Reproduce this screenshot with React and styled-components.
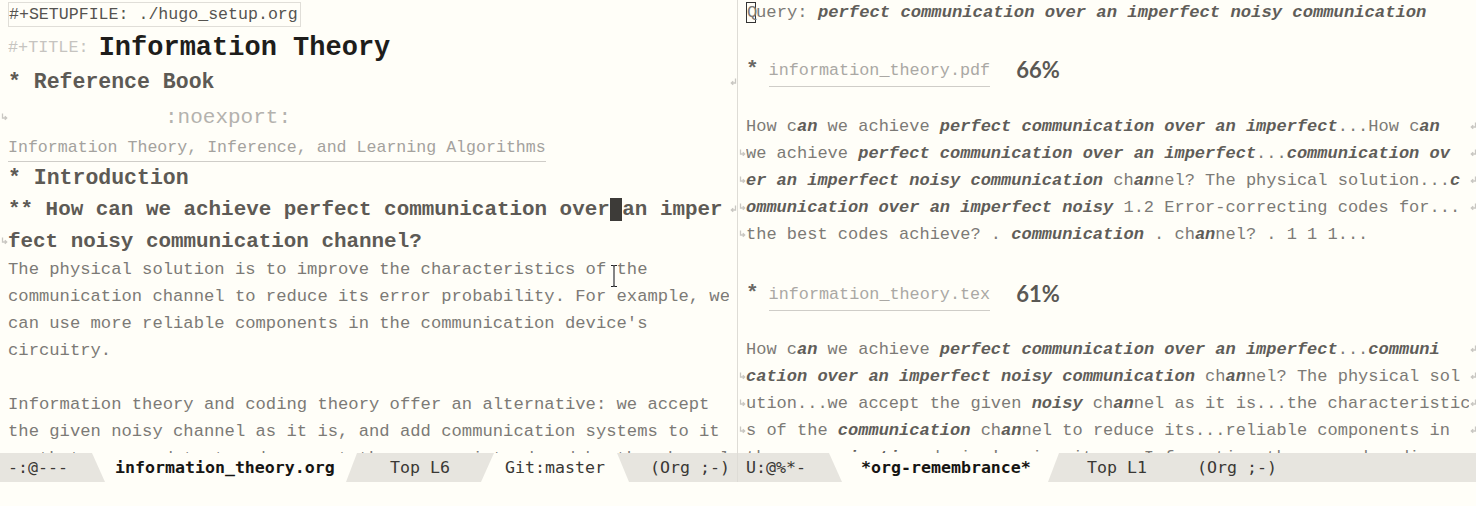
import React from "react";
import styled, { createGlobalStyle } from "styled-components";

// Emacs-ish colours
const BG = "#fffef8";
const MODE_BG = "#e7e5df";

const GlobalStyle = createGlobalStyle`
  html, body {
    margin: 0;
    padding: 0;
    background: ${BG};
  }
  body {
    font-family: "Liberation Mono", "DejaVu Sans Mono", monospace;
  }
`;

const Frame = styled.div`
  width: 1476px;
  height: 506px;
  display: flex;
  flex-direction: column;
  background: ${BG};
  overflow: hidden;
`;

const Windows = styled.div`
  display: flex;
  height: 482px;
`;

const Window = styled.div`
  display: flex;
  flex-direction: column;
  width: ${(p) => p.$w}px;
  flex-shrink: 0;
  border-right: ${(p) => (p.$divider ? "1px solid #dedcd6" : "none")};
`;

const Buffer = styled.div`
  position: relative;
  height: 453px;
  overflow: hidden;
  display: flex;
  flex-direction: column;
`;

const Row = styled.div`
  display: flex;
  align-items: center;
  height: ${(p) => p.$h}px;
  flex-shrink: 0;
  white-space: pre;
`;

const Fringe = styled.div`
  width: 8px;
  flex-shrink: 0;
  display: flex;
  align-items: center;
  justify-content: center;
`;

const Text = styled.div`
  flex: 1;
  overflow: hidden;
  display: flex;
  align-items: center;
  font-size: ${(p) => p.$size || 17.2}px;
  color: ${(p) => p.$color || "#7c7a76"};
  padding-left: ${(p) => p.$indent || 0}px;
`;

const KeywordBox = styled.span`
  display: inline-block;
  border: 1px solid #e0ded8;
  height: 23px;
  line-height: 23px;
  padding-right: 2px;
  font-size: 16.6px;
  color: #555350;
`;

const Meta = styled.span`
  font-size: 16.8px;
  color: #c6c4c0;
  margin-top: 3px;
`;

const Title = styled.span`
  font-size: 27px;
  font-weight: 700;
  color: #1e1d1b;
  margin-top: 3px;
`;

const Heading = styled.span`
  font-size: ${(p) => p.$size}px;
  font-weight: 700;
  color: #5d5a55;
`;

const Tag = styled.span`
  font-size: 21px;
  color: #b4b2ae;
`;

const Subtitle = styled.span`
  display: inline-block;
  font-size: 16.6px;
  color: #a4a29e;
  line-height: 26px;
  border-bottom: 1px solid #cfcdc8;
`;

const Cursor = styled.span`
  background: #3d3b38;
  color: ${BG};
`;

const QueryCursor = styled.span`
  display: inline-block;
  border: 1px solid #333;
  height: 19px;
  line-height: 19px;
  width: 8px;
`;

const Match = styled.span`
  font-weight: 700;
  font-style: italic;
  color: #5f5d59;
`;

const Star = styled.span`
  font-size: 21px;
  font-weight: 700;
  color: #6a6864;
  margin-right: 10px;
`;

const FileLink = styled.span`
  display: inline-block;
  font-size: 16.8px;
  color: #aaa8a4;
  line-height: 22px;
  padding-bottom: 4px;
  margin-top: 8px;
  border-bottom: 1px solid #cfcdc8;
`;

const Score = styled.span`
  font-family: Lato, "Noto Sans", sans-serif;
  font-size: 22px;
  font-weight: 700;
  color: #5a5854;
  margin-left: 26px;
`;

const IBeam = styled.svg`
  position: absolute;
  left: 609px;
  top: 264px;
`;

const ModeLine = styled.div`
  display: flex;
  height: 29px;
  background: ${MODE_BG};
  font-family: "DejaVu Sans Mono", "Liberation Mono", monospace;
  font-size: 16.6px;
  color: #3a3835;
  white-space: pre;
  overflow: hidden;
`;

const Seg = styled.div`
  display: flex;
  align-items: center;
  flex-shrink: 0;
  width: ${(p) => (p.$w ? `${p.$w}px` : "auto")};
  flex-grow: ${(p) => (p.$w ? 0 : 1)};
  padding-left: ${(p) => p.$pad || 0}px;
  box-sizing: border-box;
  font-weight: ${(p) => (p.$bold ? 700 : 400)};
  color: ${(p) => (p.$bold ? "#161513" : "#3a3835")};
  background: ${(p) => (p.$light ? BG : "transparent")};
  clip-path: ${(p) =>
    p.$shape === "down"
      ? "polygon(0 0, 100% 0, calc(100% - 11px) 100%, 13px 100%)"
      : p.$shape === "up"
      ? "polygon(13px 0, calc(100% - 12px) 0, 100% 100%, 0 100%)"
      : "none"};
`;

const Echo = styled.div`
  height: 24px;
  background: ${BG};
`;

function WrapRight() {
  return (
    <svg width="7" height="9" viewBox="0 0 7 9">
      <path d="M5.5 0.5 V5 H1.5 M3.2 3.2 L1.3 5 L3.2 6.8" fill="none" stroke="#c9c7c2" strokeWidth="1.3" />
    </svg>
  );
}

function WrapLeft() {
  return (
    <svg width="7" height="9" viewBox="0 0 7 9">
      <path d="M1.5 0.5 V5 H5.5 M3.8 3.2 L5.7 5 L3.8 6.8" fill="none" stroke="#c9c7c2" strokeWidth="1.3" />
    </svg>
  );
}

// text with |bold italic| parts
function Marked({ text }) {
  return text.split("|").map((part, i) =>
    i % 2 ? <Match key={i}>{part}</Match> : <span key={i}>{part}</span>
  );
}

function Line({ h, left, right, children, size, indent }) {
  return (
    <Row $h={h}>
      <Fringe>{left && <WrapLeft />}</Fringe>
      <Text $size={size} $indent={indent}>
        {children}
      </Text>
      <Fringe>{right && <WrapRight />}</Fringe>
    </Row>
  );
}

const bodyLines = [
  "The physical solution is to improve the characteristics of the",
  "communication channel to reduce its error probability. For example, we",
  "can use more reliable components in the communication device's",
  "circuitry.",
  "",
  "Information theory and coding theory offer an alternative: we accept",
  "the given noisy channel as it is, and add communication systems to it",
  "so that we can detect and correct the errors introduced by the channel.",
];

const pdfHits = [
  "How c|an| we achieve |perfect communication over an imperfect|...How c|an|",
  "we achieve |perfect communication over an imperfect|...|communication ov|",
  "|er an imperfect noisy communication| ch|an|nel? The physical solution...|c|",
  "|ommunication over an imperfect noisy| 1.2 Error-correcting codes for...",
  "the best codes achieve? . |communication| . ch|an|nel? . 1 1 1...",
];

const texHits = [
  "How c|an| we achieve |perfect communication over an imperfect|...|communi|",
  "|cation over an imperfect noisy communication| ch|an|nel? The physical sol",
  "ution...we accept the given |noisy| ch|an|nel as it is...the characteristic",
  "s of the |communication| ch|an|nel to reduce its...reliable components in",
  "the |communication| device's circuitry...Information theory and coding",
];

function FileHeading({ name, score }) {
  return (
    <Line h={38}>
      <Star>*</Star>
      <FileLink>{name}</FileLink>
      <Score>{score}</Score>
    </Line>
  );
}

function OrgBuffer() {
  return (
    <Buffer>
      <Line h={28}>
        <KeywordBox>#+SETUPFILE: ./hugo_setup.org</KeywordBox>
      </Line>
      <Line h={36}>
        <Meta>#+TITLE: </Meta>
        <Title>Information Theory</Title>
      </Line>
      <Line h={36} right>
        <Heading $size={21.5}>* Reference Book</Heading>
      </Line>
      <Line h={34} left indent={157}>
        <Tag>:noexport:</Tag>
      </Line>
      <Line h={28}>
        <Subtitle>Information Theory, Inference, and Learning Algorithms</Subtitle>
      </Line>
      <Line h={31}>
        <Heading $size={21.5}>* Introduction</Heading>
      </Line>
      <Line h={33} right>
        <Heading $size={20.9}>
          ** How can we achieve perfect communication over<Cursor> </Cursor>an imper
        </Heading>
      </Line>
      <Line h={30} left>
        <Heading $size={20.9}>fect noisy communication channel?</Heading>
      </Line>
      {bodyLines.map((l, i) => (
        <Line h={27} key={i}>
          {l}
        </Line>
      ))}
      <IBeam width="10" height="24" viewBox="0 0 10 24">
        <path d="M2 1.5 H4 Q5 1.5 5 3 V21 Q5 22.5 4 22.5 H2 M8 1.5 H6 Q5 1.5 5 3 M5 21 Q5 22.5 6 22.5 H8" fill="none" stroke="#fff" strokeWidth="2.6" />
        <path d="M2 1.5 H4 Q5 1.5 5 3 V21 Q5 22.5 4 22.5 H2 M8 1.5 H6 Q5 1.5 5 3 M5 21 Q5 22.5 6 22.5 H8" fill="none" stroke="#222" strokeWidth="1.1" />
      </IBeam>
    </Buffer>
  );
}

function RemembranceBuffer() {
  return (
    <Buffer>
      <Line h={25}>
        <QueryCursor>Q</QueryCursor>
        <span>
          uery: <Match>perfect communication over an imperfect noisy communication</Match>
        </span>
      </Line>
      <Row $h={25} />
      <FileHeading name="information_theory.pdf" score="66%" />
      <Row $h={25} />
      {pdfHits.map((l, i) => (
        <Line h={27} key={i} size={17} left={i > 0} right={i < 4}>
          <Marked text={l} />
        </Line>
      ))}
      <Row $h={26} />
      <FileHeading name="information_theory.tex" score="61%" />
      <Row $h={24} />
      {texHits.map((l, i) => (
        <Line h={27} key={i} size={17} left={i > 0} right={i < 4}>
          <Marked text={l} />
        </Line>
      ))}
    </Buffer>
  );
}

export default function App() {
  return (
    <>
      <GlobalStyle />
      <Frame>
        <Windows>
          <Window $w={737} $divider>
            <OrgBuffer />
            <ModeLine>
              <Seg $w={92} $pad={8}>-:@---</Seg>
              <Seg $w={265} $pad={23} $light $bold $shape="down">
                information_theory.org
              </Seg>
              <Seg $w={124} $pad={33}>Top L6</Seg>
              <Seg $w={148} $pad={24} $light $shape="up">
                Git:master
              </Seg>
              <Seg $pad={21}>(Org ;-)</Seg>
            </ModeLine>
          </Window>
          <Window $w={739}>
            <RemembranceBuffer />
            <ModeLine>
              <Seg $w={91} $pad={8}>U:@%*-</Seg>
              <Seg $w={230} $pad={32} $light $bold $shape="down">
                *org-remembrance*
              </Seg>
              <Seg $w={138} $pad={28}>Top L1</Seg>
              <Seg>(Org ;-)</Seg>
            </ModeLine>
          </Window>
        </Windows>
        <Echo />
      </Frame>
    </>
  );
}
